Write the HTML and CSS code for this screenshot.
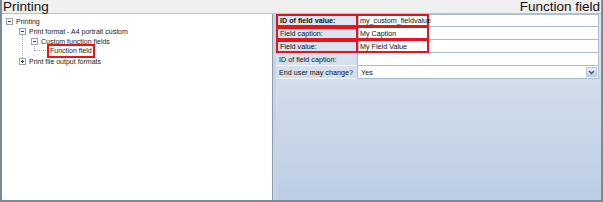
FILE: index.html
```html
<!DOCTYPE html>
<html>
<head>
<meta charset="utf-8">
<link rel="stylesheet" href="styles.css">
</head>
<body>
<div class="window">
  <div class="header">
    <span class="title">Printing</span>
    <span class="title">Function field</span>
  </div>
  <div class="body">
    <div class="tree">
      <div class="node l0"><span class="box minus"></span><span class="label">Printing</span></div>
      <div class="group">
        <div class="node l1"><span class="box minus"></span><span class="label">Print format - A4 portrait custom</span></div>
        <div class="node l2"><span class="box minus"></span><span class="label">Custom function fields</span></div>
        <div class="node l3"><span class="conn"></span><span class="label sel">Function field</span></div>
        <div class="node l1"><span class="box plus"></span><span class="label">Print file output formats</span></div>
      </div>
    </div>
    <div class="splitter"></div>
    <div class="props">
      <div class="row hl">
        <div class="key bold">ID of field value:</div>
        <div class="val"><span class="mark">my_custom_fieldvalue</span></div>
      </div>
      <div class="row hl">
        <div class="key">Field caption:</div>
        <div class="val"><span class="mark">My Caption</span></div>
      </div>
      <div class="row hl">
        <div class="key">Field value:</div>
        <div class="val"><span class="mark">My Field Value</span></div>
      </div>
      <div class="row">
        <div class="key">ID of field caption:</div>
        <div class="val"></div>
      </div>
      <div class="row">
        <div class="key">End user may change?</div>
        <div class="val combo"><span class="combo-text">Yes</span><span class="arrow"><svg width="7" height="5" viewBox="0 0 7 5"><path d="M1 1 L3.5 3.5 L6 1" fill="none" stroke="#3a4f78" stroke-width="1.3"/></svg></span></div>
      </div>
    </div>
  </div>
</div>
</body>
</html>
```
FILE: styles.css
```css
html, body {
  margin: 0;
  padding: 0;
  background: #ffffff;
}
body {
  font-family: "Liberation Sans", Arial, sans-serif;
}
.window {
  width: 603px;
  height: 202px;
  box-sizing: border-box;
  border-left: 2px solid #7e8998;
  border-right: 2px solid #7e8998;
  border-bottom: 2px solid #7e8998;
  display: flex;
  flex-direction: column;
  background: #f0f0f0;
}
.header {
  height: 13px;
  display: flex;
  justify-content: space-between;
  align-items: center;
  padding: 0 1px 0 1px;
  background: #f0f0f0;
  border-bottom: 1px solid #b9c3cf;
}
.title {
  font-size: 13.5px;
  line-height: 13px;
  color: #111;
}
.body {
  flex: 1;
  display: flex;
  min-height: 0;
}
.tree {
  width: 271px;
  background: #ffffff;
  padding-top: 2px;
  box-sizing: border-box;
  border-right: 1px solid #8f9cae;
}
.splitter {
  width: 3px;
  background: #c9d4e3;
}
.group {
  position: relative;
}
.group::before {
  content: "";
  position: absolute;
  left: 20px;
  top: 8px;
  height: 30px;
  border-left: 1px dotted #a8a8a8;
}
.node {
  height: 10px;
  display: flex;
  align-items: center;
  font-size: 7px;
  color: #1a1a1a;
  white-space: nowrap;
  position: relative;
}
.l0 { padding-left: 4px; }
.l1 { padding-left: 17px; }
.l2 { padding-left: 29px; }
.l3 { padding-left: 32px; }
.box {
  width: 5px;
  height: 5px;
  border: 1px solid #97a3b2;
  background: #fff;
  position: relative;
  margin-right: 3px;
  flex: none;
}
.box::before {
  content: "";
  position: absolute;
  left: 1px;
  top: 2px;
  width: 3px;
  height: 1px;
  background: #2a3b5a;
}
.plus::after {
  content: "";
  position: absolute;
  left: 2px;
  top: 1px;
  width: 1px;
  height: 3px;
  background: #2a3b5a;
}
.conn {
  width: 11px;
  height: 6px;
  border-left: 1px dotted #a8a8a8;
  border-bottom: 1px dotted #a8a8a8;
  margin-top: -7px;
  margin-right: 1px;
  flex: none;
}
.sel {
  border: 2px solid #e8141c;
  padding: 1px 1px;
  line-height: 8px;
}
.props {
  flex: 1;
  background: linear-gradient(to bottom, #e0e7f1 0%, #bccde4 100%);
  padding: 0 2px 0 0;
}
.row {
  display: flex;
  height: 13px;
  font-size: 7.2px;
}
.key {
  width: 78px;
  padding-left: 3px;
  display: flex;
  align-items: center;
  color: #111;
  border-bottom: 1px solid #f3f6fa;
}
.bold { font-weight: bold; }
.val {
  flex: 1;
  background: #fff;
  border: 1px solid #a9bcd6;
  border-top: none;
  display: flex;
  align-items: stretch;
  color: #111;
}
.row:first-child .val { border-top: 1px solid #a9bcd6; }
.hl .key {
  outline: 2px solid #e8141c;
  outline-offset: -2px;
  padding-left: 4px;
}
.mark {
  width: 71px;
  box-sizing: border-box;
  border: 2px solid #e8141c;
  border-left: none;
  padding-left: 2px;
  display: flex;
  align-items: center;
  margin-left: -1px;
  margin-top: -1px;
  margin-bottom: -1px;
}
.combo-text {
  flex: 1;
  padding-left: 3px;
  display: flex;
  align-items: center;
}
.arrow {
  width: 9px;
  margin: 1px;
  background: linear-gradient(to bottom, #e6eefa, #c3d3ea);
  border: 1px solid #b5c6df;
  display: flex;
  align-items: center;
  justify-content: center;
}
```
